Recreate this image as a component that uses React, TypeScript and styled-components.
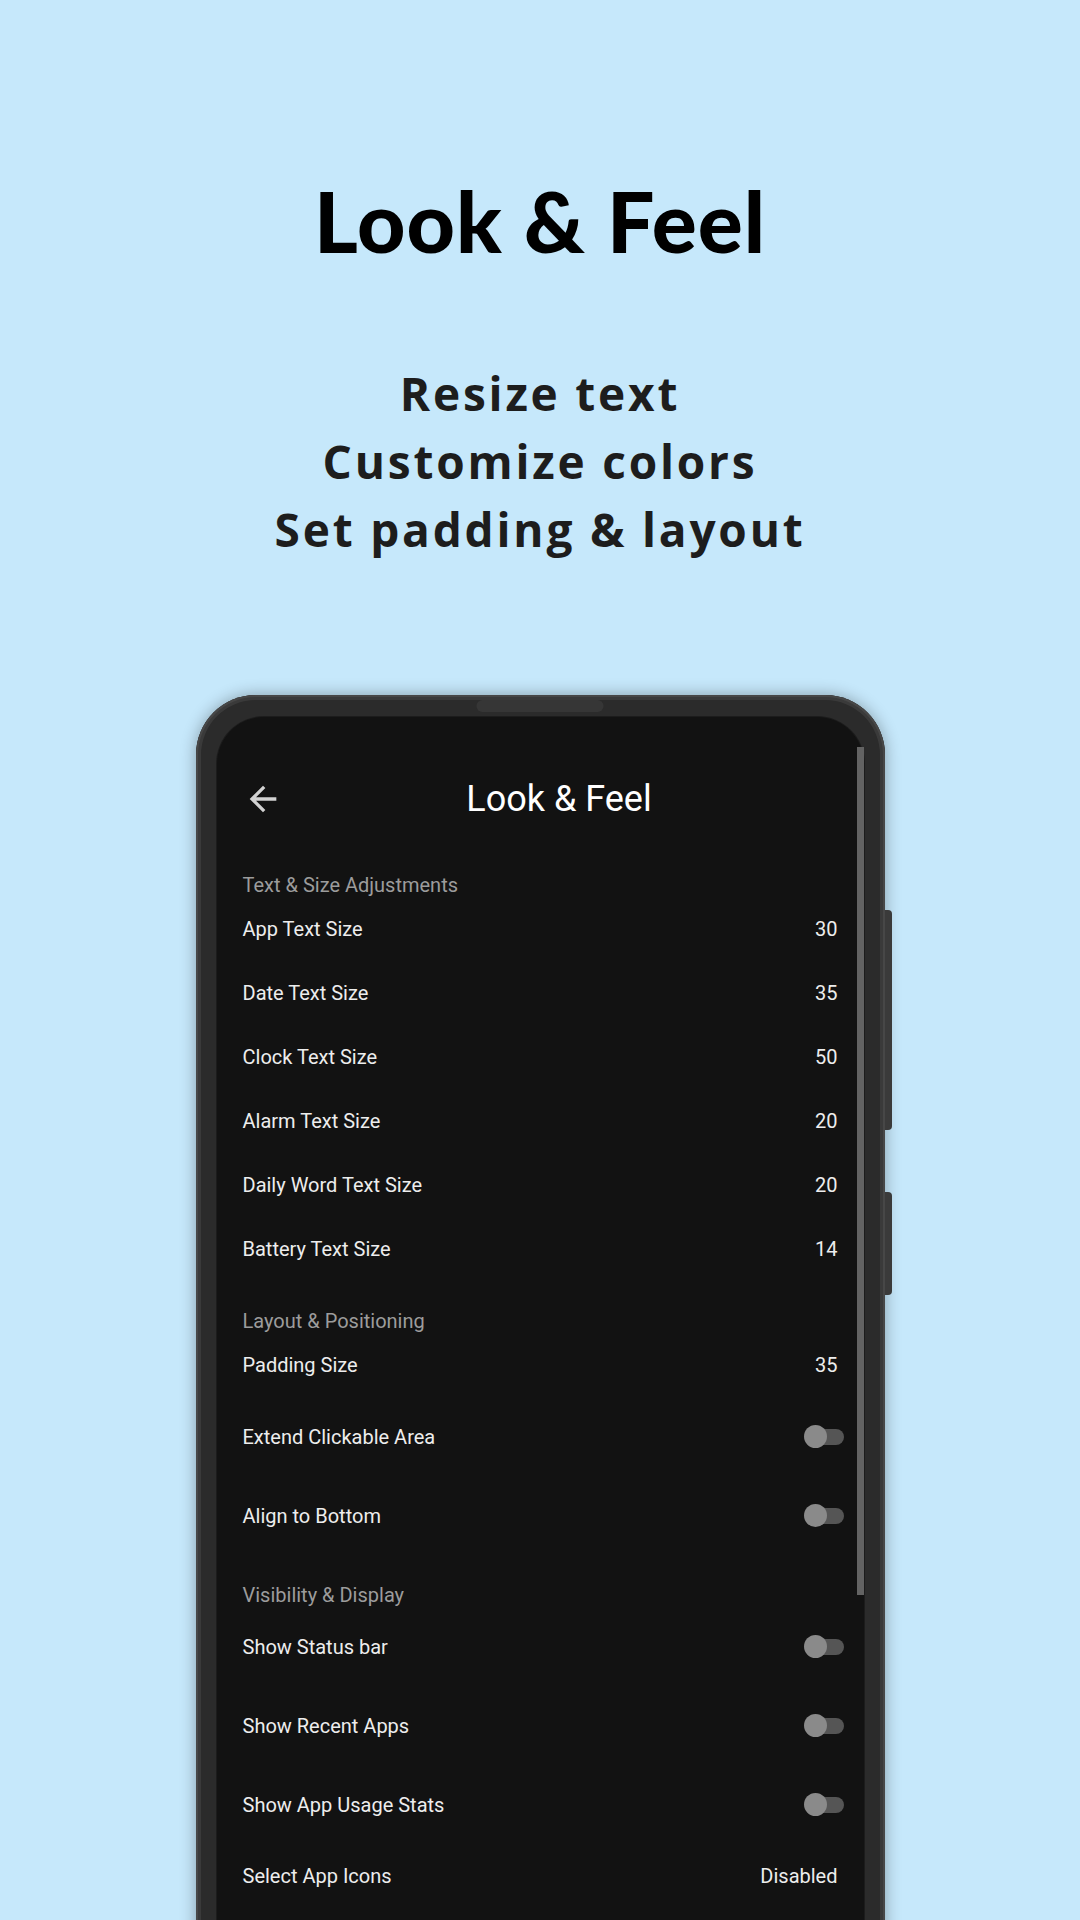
import React from "react";
import styled, { createGlobalStyle } from "styled-components";

const GlobalStyle = createGlobalStyle`
  html, body {
    margin: 0;
    padding: 0;
    background: #c6e8fb;
  }
  * { box-sizing: border-box; }
`;

const Page = styled.div`
  width: 1080px;
  height: 1920px;
  overflow: hidden;
  background: #c6e8fb;
  display: flex;
  flex-direction: column;
  align-items: center;
`;

const Headline = styled.h1`
  margin: 171px 0 0;
  font-family: "Lato", "Noto Sans", sans-serif;
  font-weight: 900;
  font-size: 84px;
  line-height: 100px;
  letter-spacing: 1px;
  color: #000;
  text-align: center;
`;

const Features = styled.div`
  margin-top: 88px;
  display: flex;
  flex-direction: column;
  align-items: center;
`;

const Feature = styled.div`
  font-family: "Open Sans", "Noto Sans", sans-serif;
  font-weight: 700;
  font-size: 46px;
  line-height: 68px;
  letter-spacing: 2.8px;
  color: #1d1d1d;
  text-align: center;
`;

const Phone = styled.div`
  position: relative;
  margin-top: 132px;
  width: 689px;
  height: 1300px;
  flex-shrink: 0;
  padding: 22px 21px 0;
  border-radius: 60px 60px 0 0;
  background: #2b2b2b;
  box-shadow: inset 0 0 0 2px #474747, inset 0 0 0 5px #3a3a3a,
    0 0 16px rgba(0, 0, 0, 0.32);
  display: flex;
  flex-direction: column;
`;

const Speaker = styled.div`
  position: absolute;
  top: 5px;
  left: 50%;
  transform: translateX(-50%);
  width: 127px;
  height: 12px;
  border-radius: 6px;
  background: #363636;
`;

const SideButton = styled.div<{ $top: number; $height: number }>`
  position: absolute;
  right: -7px;
  top: ${(p) => p.$top}px;
  width: 7px;
  height: ${(p) => p.$height}px;
  border-radius: 0 4px 4px 0;
  background: #3a3a3a;
`;

const Screen = styled.div`
  position: relative;
  flex: 1;
  background: #121212;
  border-radius: 47px 47px 0 0;
  box-shadow: 0 0 0 1px #1c1c1c;
  padding-top: 50px;
  display: flex;
  flex-direction: column;
  font-family: "Roboto", "Liberation Sans", sans-serif;
`;

const ScrollThumb = styled.div`
  position: absolute;
  right: 0;
  top: 30px;
  width: 7px;
  height: 848px;
  background: #636363;
`;

const Toolbar = styled.div`
  height: 64px;
  display: flex;
  align-items: center;
  padding: 0 28px 0 26px;
`;

const BackButton = styled.div`
  width: 40px;
  height: 40px;
  display: flex;
  align-items: center;
  justify-content: center;
  color: #d2d2d2;
`;

const ToolbarTitle = styled.div`
  flex: 1;
  text-align: center;
  font-size: 36px;
  line-height: 64px;
  color: #ffffff;
`;

const List = styled.div`
  margin-top: 42px;
  display: flex;
  flex-direction: column;
`;

const Section = styled.div<{ $first?: boolean }>`
  display: flex;
  flex-direction: column;
  margin-top: ${(p) => (p.$first ? 0 : 28)}px;
`;

const SectionHeader = styled.div`
  height: 24px;
  padding: 0 26px;
  font-size: 20px;
  line-height: 24px;
  color: #9c9c9c;
`;

const Row = styled.div<{ $tall?: boolean }>`
  height: ${(p) => (p.$tall ? 79 : 64)}px;
  display: flex;
  align-items: center;
  justify-content: space-between;
  padding: 0 26px;
`;

const Label = styled.div`
  font-size: 20px;
  line-height: 24px;
  color: #ededed;
`;

const Value = styled.div`
  font-size: 20px;
  line-height: 24px;
  color: #ededed;
`;

const Switch = styled.div`
  position: relative;
  width: 40px;
  height: 23px;
  margin-right: -6px;
`;

const Track = styled.div`
  position: absolute;
  right: 0;
  top: 3.5px;
  width: 34px;
  height: 16px;
  border-radius: 8px;
  background: #555555;
`;

const Thumb = styled.div`
  position: absolute;
  left: 0;
  top: 0;
  width: 23px;
  height: 23px;
  border-radius: 50%;
  background: #8a8a8a;
`;

type Item =
  | { label: string; value: string }
  | { label: string; toggle: true };

const sections: { title: string; items: Item[] }[] = [
  {
    title: "Text & Size Adjustments",
    items: [
      { label: "App Text Size", value: "30" },
      { label: "Date Text Size", value: "35" },
      { label: "Clock Text Size", value: "50" },
      { label: "Alarm Text Size", value: "20" },
      { label: "Daily Word Text Size", value: "20" },
      { label: "Battery Text Size", value: "14" },
    ],
  },
  {
    title: "Layout & Positioning",
    items: [
      { label: "Padding Size", value: "35" },
      { label: "Extend Clickable Area", toggle: true },
      { label: "Align to Bottom", toggle: true },
    ],
  },
  {
    title: "Visibility & Display",
    items: [
      { label: "Show Status bar", toggle: true },
      { label: "Show Recent Apps", toggle: true },
      { label: "Show App Usage Stats", toggle: true },
      { label: "Select App Icons", value: "Disabled" },
    ],
  },
];

const ArrowBack = () => (
  <svg width="40" height="40" viewBox="0 0 24 24" fill="currentColor">
    <path d="M20 11H7.83l5.59-5.59L12 4l-8 8 8 8 1.41-1.41L7.83 13H20v-2z" />
  </svg>
);

export default function App() {
  return (
    <>
      <GlobalStyle />
      <Page>
        <Headline>Look &amp; Feel</Headline>
        <Features>
          <Feature>Resize text</Feature>
          <Feature>Customize colors</Feature>
          <Feature>Set padding &amp; layout</Feature>
        </Features>
        <Phone>
          <Speaker />
          <SideButton $top={215} $height={220} />
          <SideButton $top={497} $height={103} />
          <Screen>
            <ScrollThumb />
            <Toolbar>
              <BackButton>
                <ArrowBack />
              </BackButton>
              <ToolbarTitle>Look &amp; Feel</ToolbarTitle>
            </Toolbar>
            <List>
              {sections.map((s, i) => (
                <Section key={s.title} $first={i === 0}>
                  <SectionHeader>{s.title}</SectionHeader>
                  {s.items.map((it) =>
                    "toggle" in it ? (
                      <Row key={it.label} $tall>
                        <Label>{it.label}</Label>
                        <Switch>
                          <Track />
                          <Thumb />
                        </Switch>
                      </Row>
                    ) : (
                      <Row key={it.label}>
                        <Label>{it.label}</Label>
                        <Value>{it.value}</Value>
                      </Row>
                    )
                  )}
                </Section>
              ))}
            </List>
          </Screen>
        </Phone>
      </Page>
    </>
  );
}
